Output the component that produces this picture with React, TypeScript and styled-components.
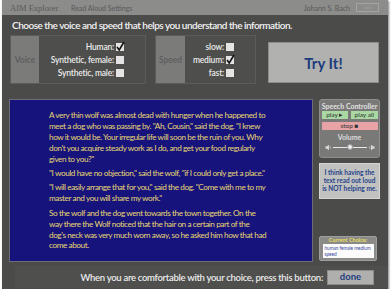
import styled, { createGlobalStyle } from 'styled-components';

const GlobalStyle = createGlobalStyle`
  html, body { margin: 0; padding: 0; background: #ffffff; }
  body { font-family: "Lato", "Open Sans", sans-serif; }
`;

const Frame = styled.div`
  width: 386px;
  height: 289px;
  margin-left: 2px;
  background: #4b4b49;
  display: flex;
  flex-direction: column;
  box-shadow: 1px 1px 2px rgba(0,0,0,0.5);
`;

const TopBar = styled.div`
  height: 15px;
  background: #8c8c8b;
  display: flex;
  align-items: center;
  padding: 0 9px 0 8px;
  color: #5a5a5a;
`;

const AppName = styled.span`
  font-family: "Liberation Serif", serif;
  font-size: 8.5px;
  width: 61px;
`;

const Section = styled.span`
  font-size: 7px;
  flex: 1;
`;

const User = styled.span`
  font-size: 7px;
  margin-right: 6px;
`;

const ExitButton = styled.span`
  width: 21px;
  height: 7px;
  border: 1px solid #a4a4a4;
  font-size: 4px;
  color: #a8a8a8;
  text-align: center;
  line-height: 7px;
`;

const Heading = styled.div`
  color: #f2f2f2;
  font-size: 10px;
  font-weight: 600;
  letter-spacing: -0.5px;
  padding: 3px 0 0 10px;
  height: 14px;
  line-height: 14px;
`;

const SettingsRow = styled.div`
  display: flex;
  padding: 3px 0 0 8px;
  gap: 9px;
  height: 49px;
`;

const OptionPanel = styled.div<{ $w: number }>`
  box-sizing: border-box;
  width: ${p => p.$w}px;
  height: 49px;
  display: flex;
  border: 1px solid #5c5c5a;
  background: #4e4e4c;
`;

const PanelLabel = styled.div<{ $w: number }>`
  width: ${p => p.$w}px;
  background: #7b7b7a;
  color: #5b5b5b;
  font-size: 8.5px;
  font-weight: 600;
  display: flex;
  align-items: center;
  justify-content: center;
`;

const Options = styled.div`
  flex: 1;
  display: flex;
  flex-direction: column;
  align-items: flex-end;
  justify-content: center;
  gap: 4px;
  padding-right: 21px;
`;

const OptionRow = styled.label`
  display: flex;
  align-items: center;
  gap: 2px;
  color: #eaeaea;
  font-size: 8.5px;
  font-weight: 600;
  letter-spacing: -0.2px;
  height: 9px;
`;

const Box = styled.span`
  width: 8px;
  height: 8px;
  background: #e4e4e4;
  position: relative;
`;

const CheckMark = styled.svg`
  position: absolute;
  left: 0;
  top: -2px;
`;

const TryButton = styled.button`
  margin: 7px 0 0 3px;
  width: 111px;
  height: 41px;
  background: #b1b1b0;
  border: 1px solid #8c8c8c;
  color: #1c3c7c;
  font-family: "Lato", sans-serif;
  font-size: 15px;
  font-weight: 700;
`;

const Main = styled.div`
  display: flex;
  margin-top: 15px;
  padding-left: 7px;
  gap: 6px;
`;

const Story = styled.div`
  width: 302px;
  height: 161px;
  background: #17137c;
  border: 1px solid #6c6c7a;
  color: #e6d772;
  font-size: 8.2px;
  letter-spacing: -0.42px;
  line-height: 10.9px;
`;

const StoryText = styled.div`
  padding: 10px 0 0 39px;
  white-space: nowrap;
`;

const Para = styled.p`
  margin: 0 0 3.5px 0;
`;

const Sidebar = styled.div`
  width: 61px;
  display: flex;
  flex-direction: column;
`;

const Controller = styled.div`
  height: 56px;
  background: #797978;
  border: 1px solid #8e8e8e;
  border-radius: 3px;
  display: flex;
  flex-direction: column;
  align-items: center;
  padding-top: 1px;
`;

const ControllerTitle = styled.div`
  color: #e0e0e0;
  font-size: 7px;
  font-weight: 700;
  height: 10px;
  line-height: 10px;
`;

const ButtonRow = styled.div`
  display: flex;
  gap: 3px;
  width: 56px;
`;

const CtrlButton = styled.div<{ $bg: string }>`
  flex: 1;
  height: 8px;
  background: ${p => p.$bg};
  color: #333;
  font-size: 6.5px;
  line-height: 8px;
  text-align: center;
  margin-bottom: 3px;
`;

const VolumeLabel = styled.div`
  color: #dcdcdc;
  font-size: 7px;
  font-weight: 700;
  height: 9px;
  line-height: 9px;
`;

const Slider = styled.div`
  display: flex;
  align-items: center;
  gap: 1px;
  height: 10px;
`;

const Track = styled.div`
  width: 34px;
  height: 1px;
  background: #e8e8e8;
  position: relative;
`;

const Knob = styled.span`
  position: absolute;
  left: 14px;
  top: -3px;
  width: 6px;
  height: 6px;
  border-radius: 50%;
  background: #f0f0f0;
  border: 1px solid #999;
  box-sizing: border-box;
`;

const Feedback = styled.div`
  margin-top: 5px;
  height: 34px;
  background: #c1c1c0;
  border: 1px solid #d4d4d4;
  color: #26448a;
  font-size: 6.5px;
  font-weight: 700;
  line-height: 8px;
  text-align: center;
  display: flex;
  align-items: center;
  justify-content: center;
`;

const Spacer = styled.div`
  flex: 1;
`;

const ChoiceBox = styled.div`
  width: 56px;
  height: 23px;
  background: #8a8a89;
  border: 1px solid #9e9e9e;
  border-radius: 2px;
  margin-bottom: 1px;
  display: flex;
  flex-direction: column;
  align-items: center;
`;

const ChoiceTitle = styled.div`
  color: #e6de5e;
  font-size: 5.5px;
  font-weight: 700;
  height: 7px;
  line-height: 7px;
`;

const ChoiceValue = styled.div`
  width: 51px;
  height: 14px;
  background: #fbfbfb;
  color: #3a4aa0;
  font-size: 4.8px;
  letter-spacing: -0.1px;
  white-space: nowrap;
  line-height: 6px;
  padding: 1px 1px 0 2px;
  box-sizing: border-box;
`;

const Footer = styled.div`
  display: flex;
  align-items: center;
  justify-content: flex-end;
  margin-top: 4px;
  padding-right: 14px;
  gap: 4px;
  height: 22px;
  background: #4f4f4d;
  margin-left: 13px;
`;

const FooterText = styled.span`
  color: #ececec;
  font-size: 9.5px;
  font-weight: 600;
  letter-spacing: -0.3px;
`;

const DoneButton = styled.button`
  width: 47px;
  height: 15px;
  padding: 0;
  background: #afafae;
  border: 1px solid #8c8c8c;
  color: #1f3f7f;
  font-family: "Lato", sans-serif;
  font-size: 9.5px;
  font-weight: 700;
  line-height: 12px;
`;

const Check = ({ on }: { on?: boolean }) => (
  <Box>
    {on && (
      <CheckMark width="9" height="10" viewBox="0 0 9 10">
        <path d="M1 6 L3.2 9 L8 1" stroke="#111" strokeWidth="1.6" fill="none" />
      </CheckMark>
    )}
  </Box>
);

const Speaker = ({ flip }: { flip?: boolean }) => (
  <svg width="7" height="7" viewBox="0 0 7 7" style={flip ? { transform: 'scaleX(-1)' } : undefined}>
    <path d="M0.5 2.3 H2 L4 0.8 V6.2 L2 4.7 H0.5 Z" fill="#d8d8d8" />
    <path d="M5 2.2 Q6 3.5 5 4.8" stroke="#d8d8d8" strokeWidth="0.7" fill="none" />
  </svg>
);

export default function App() {
  return (
    <>
      <GlobalStyle />
      <Frame>
        <TopBar>
          <AppName>AIM Explorer</AppName>
          <Section>Read Aloud Settings</Section>
          <User>Johann S. Bach</User>
          <ExitButton>exit</ExitButton>
        </TopBar>
        <Heading>Choose the voice and speed that helps you understand the information.</Heading>
        <SettingsRow>
          <OptionPanel $w={136}>
            <PanelLabel $w={28}>Voice</PanelLabel>
            <Options>
              <OptionRow>Human: <Check on /></OptionRow>
              <OptionRow>Synthetic, female: <Check /></OptionRow>
              <OptionRow>Synthetic, male: <Check /></OptionRow>
            </Options>
          </OptionPanel>
          <OptionPanel $w={101}>
            <PanelLabel $w={29}>Speed</PanelLabel>
            <Options>
              <OptionRow>slow: <Check /></OptionRow>
              <OptionRow>medium: <Check on /></OptionRow>
              <OptionRow>fast: <Check /></OptionRow>
            </Options>
          </OptionPanel>
          <TryButton>Try It!</TryButton>
        </SettingsRow>
        <Main>
          <Story>
            <StoryText>
              <Para>
                A very thin wolf was almost dead with hunger when he happened to<br />
                meet a dog who was passing by. "Ah, Cousin," said the dog. "I knew<br />
                how it would be. Your irregular life will soon be the ruin of you. Why<br />
                don't you acquire steady work as I do, and get your food regularly<br />
                given to you?"
              </Para>
              <Para>"I would have no objection," said the wolf, "if I could only get a place."</Para>
              <Para>
                "I will easily arrange that for you," said the dog. "Come with me to my<br />
                master and you will share my work."
              </Para>
              <Para>
                So the wolf and the dog went towards the town together. On the<br />
                way there the Wolf noticed that the hair on a certain part of the<br />
                dog's neck was very much worn away, so he asked him how that had<br />
                come about.
              </Para>
            </StoryText>
          </Story>
          <Sidebar>
            <Controller>
              <ControllerTitle>Speech Controller</ControllerTitle>
              <ButtonRow>
                <CtrlButton $bg="#a9d8a2">play ▸</CtrlButton>
                <CtrlButton $bg="#a9d8a2">play all</CtrlButton>
              </ButtonRow>
              <ButtonRow>
                <CtrlButton $bg="#e7a3a6">stop ■</CtrlButton>
              </ButtonRow>
              <VolumeLabel>Volume</VolumeLabel>
              <Slider>
                <Speaker />
                <Track><Knob /></Track>
                <Speaker flip />
              </Slider>
            </Controller>
            <Feedback>I think having the<br />text read out loud<br />is NOT helping me.</Feedback>
            <Spacer />
            <ChoiceBox>
              <ChoiceTitle>Current Choice:</ChoiceTitle>
              <ChoiceValue>human female medium<br />speed</ChoiceValue>
            </ChoiceBox>
          </Sidebar>
        </Main>
        <Footer>
          <FooterText>When you are comfortable with your choice, press this button:</FooterText>
          <DoneButton>done</DoneButton>
        </Footer>
      </Frame>
    </>
  );
}
